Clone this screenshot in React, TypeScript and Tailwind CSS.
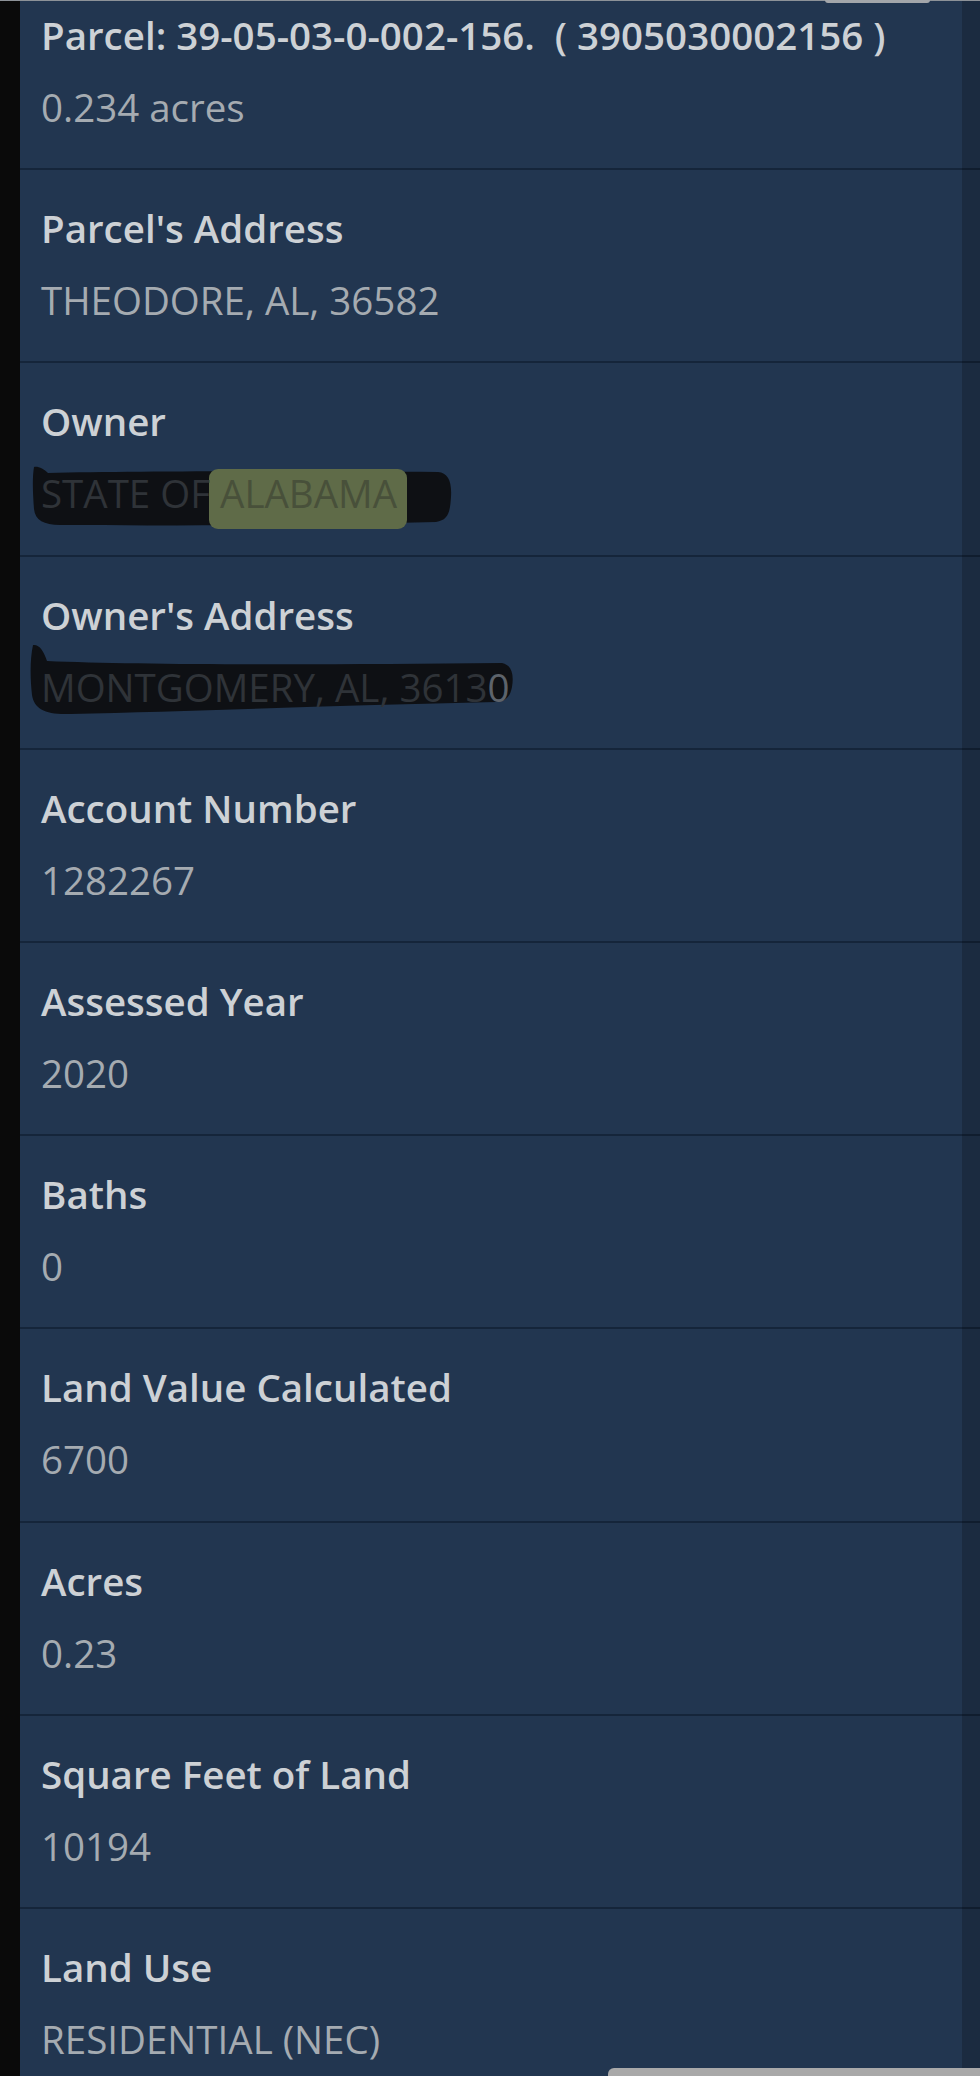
import React from "react";

type Row = { label: string; value: React.ReactNode; kind?: "owner" | "addr"; h: string };

function OwnerMarker() {
  return (
    <svg className="absolute left-0 top-0 z-0" width="520" height="193" viewBox="0 0 520 193">
      <path
        d="M14 104 C18 103 24 106 28 110 C120 108 300 108 418 109 C428 110 432 118 431 134 C430 150 428 157 416 159 C300 162 150 163 40 162 C24 162 15 157 14 146 C13 132 12 116 14 104 Z"
        fill="#0e1014"
      />
      <rect x="189" y="106" width="198" height="60" rx="9" fill="#5f6b48" />
    </svg>
  );
}

function AddrMarker() {
  return (
    <svg className="absolute left-0 top-0 z-0" width="520" height="193" viewBox="0 0 520 193">
      <path
        d="M13 88 C19 87 24 94 27 104 C120 108 300 108 482 106 C492 108 494 118 492 130 C490 140 486 144 476 145 C330 148 180 154 50 157 C26 158 14 152 12 138 C10 120 10 102 13 88 Z"
        fill="#0e1014"
      />
    </svg>
  );
}

const rows: Row[] = [
  { label: "Parcel: 39-05-03-0-002-156.\u00a0 ( 3905030002156 )", value: "0.234 acres", h: "h-[170px] pt-[11px]" },
  { label: "Parcel's Address", value: "THEODORE, AL, 36582", h: "h-[193px] pt-[34px]" },
  {
    label: "Owner",
    kind: "owner",
    h: "h-[194px] pt-[34px]",
    value: (
      <>
        <span className="text-[#2f3338]">STATE OF </span>
        <span className="text-[#48503a]">ALABAMA</span>
      </>
    ),
  },
  {
    label: "Owner's Address",
    kind: "addr",
    h: "h-[193px] pt-[34px]",
    value: (
      <>
        <span className="text-[#2f3338]">MONTGOMERY, AL, 3613</span>
        <span className="text-[#5d636b]">0</span>
      </>
    ),
  },
  { label: "Account Number", value: "1282267", h: "h-[193px] pt-[34px]" },
  { label: "Assessed Year", value: "2020", h: "h-[193px] pt-[34px]" },
  { label: "Baths", value: "0", h: "h-[193px] pt-[34px]" },
  { label: "Land Value Calculated", value: "6700", h: "h-[194px] pt-[34px]" },
  { label: "Acres", value: "0.23", h: "h-[193px] pt-[34px]" },
  { label: "Square Feet of Land", value: "10194", h: "h-[193px] pt-[34px]" },
  { label: "Land Use", value: "RESIDENTIAL (NEC)", h: "h-[193px] pt-[34px]" },
];

export default function App() {
  return (
    <div className="relative flex h-[2076px] w-[980px] overflow-hidden bg-[#0a0a0a] font-['Open_Sans',sans-serif]">
      <div className="w-[20px] shrink-0 bg-[#0a0a0a]" />
      <div className="relative flex flex-1 flex-col bg-[#223650]">
        {rows.map((r, i) => (
          <div
            key={i}
            className={"relative flex shrink-0 flex-col gap-[24px] border-b-2 border-[#15253a] pl-[21px] " + r.h}
          >
            {r.kind === "owner" && <OwnerMarker />}
            {r.kind === "addr" && <AddrMarker />}
            <div className="relative z-10 whitespace-pre text-[38.5px] font-semibold leading-[48px] text-[#cdd1d5]">
              {r.label}
            </div>
            <div className="relative z-10 whitespace-pre text-[38.5px] leading-[48px] text-[#a5abb1]">{r.value}</div>
          </div>
        ))}
        <div className="pointer-events-none absolute bottom-0 right-0 top-0 w-[18px] bg-black/20" />
      </div>
      <div className="pointer-events-none absolute left-0 right-0 top-0 h-px bg-[#8d9298]" />
      <div className="pointer-events-none absolute left-[825px] top-0 h-[3px] w-[105px] rounded-b-[3px] bg-[#a3a6aa]" />
      <div className="pointer-events-none absolute bottom-0 left-[608px] h-[8px] w-[372px] rounded-tl-[6px] bg-[#a9a9a9]" />
    </div>
  );
}
